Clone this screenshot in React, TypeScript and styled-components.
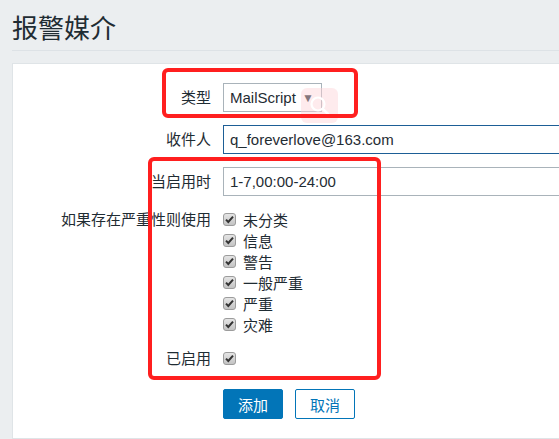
import React from 'react'
import styled, { createGlobalStyle } from 'styled-components'

const GlobalStyle = createGlobalStyle`
html, body {
  margin: 0;
  padding: 0;
  overflow: hidden;
  background: #ebeef0;
}
body {
  font-family: "Liberation Sans", Arial, "Noto Sans CJK SC", sans-serif;
  color: #1f2c33;
}
`

const severities = ['未分类', '信息', '警告', '一般严重', '严重', '灾难']

const CheckBox = () => (
  <svg width="13" height="13" viewBox="0 0 13 13">
    <defs>
      <linearGradient id="cbg" x1="0" y1="0" x2="0" y2="1">
        <stop offset="0" stopColor="#e6e6e6" />
        <stop offset="1" stopColor="#c2c2c2" />
      </linearGradient>
    </defs>
    <rect x="0.5" y="0.5" width="12" height="12" rx="2.5" fill="url(#cbg)" stroke="#9c9c9c" />
    <path d="M3 6.6 L5.3 9 L10 3.6" fill="none" stroke="#333" strokeWidth="2" />
  </svg>
)

const App = () => {
  return (
    <Page>
      <GlobalStyle />
      <Header>
        <Title>报警媒介</Title>
      </Header>
      <Card>
        <Row>
          <Label>类型</Label>
          <Select>
            <span>MailScript</span>
            <Arrow>▼</Arrow>
          </Select>
        </Row>
        <Row>
          <Label>收件人</Label>
          <Input focused>q_foreverlove@163.com</Input>
        </Row>
        <Row>
          <Label>当启用时</Label>
          <Input>1-7,00:00-24:00</Input>
        </Row>
        <Row align="start">
          <Label small>如果存在严重性则使用</Label>
          <CheckList>
            {severities.map((s) => (
              <CheckItem key={s}>
                <CheckBox />
                <span>{s}</span>
              </CheckItem>
            ))}
          </CheckList>
        </Row>
        <Row>
          <Label small>已启用</Label>
          <CheckItem>
            <CheckBox />
          </CheckItem>
        </Row>
        <Row top={20}>
          <span />
          <Buttons>
            <Button primary>添加</Button>
            <Button>取消</Button>
          </Buttons>
        </Row>
      </Card>
      <Watermark>
        <svg width="22" height="22" viewBox="0 0 22 22">
          <circle cx="9" cy="9" r="6.5" fill="none" stroke="#fff" strokeWidth="2.2" />
          <path d="M13.8 13.8 L19 19" stroke="#fff" strokeWidth="2.6" strokeLinecap="round" />
        </svg>
      </Watermark>
      <Mark style={{ left: 162, top: 68, width: 196, height: 50 }} />
      <Mark style={{ left: 148, top: 157, width: 233, height: 223 }} />
    </Page>
  )
}

export default App

const Page = styled.div`
position: relative;
width: 559px;
height: 439px;
overflow: hidden;
padding: 0 0 0 12px;
box-sizing: border-box;
`
const Header = styled.div`
height: 51px;
padding-top: 3px;
box-sizing: border-box;
display: flex;
align-items: center;
border-bottom: 1px solid #dde2e6;
margin-right: -20px;
`
const Title = styled.h1`
margin: 0;
font-size: 26px;
font-weight: normal;
color: #1f2c33;
`
const Card = styled.div`
margin-top: 12px;
margin-right: -40px;
height: 376px;
box-sizing: border-box;
background: #fff;
border: 1px solid #dfe4e7;
padding-top: 19px;
display: flex;
flex-direction: column;
gap: 13px;
`
const Row = styled.div<{ align?: string; top?: number }>`
display: grid;
grid-template-columns: 198px 1fr;
column-gap: 12px;
align-items: ${(p) => p.align || 'center'};
margin-top: ${(p) => (p.top ? p.top - 13 : 0)}px;
`
const Label = styled.div<{ small?: boolean }>`
text-align: right;
font-size: 15px;
line-height: ${(p) => (p.small ? '21px' : '29px')};
white-space: nowrap;
`
const Select = styled.div`
width: 99px;
height: 29px;
box-sizing: border-box;
border: 1px solid #a9b3ba;
display: flex;
align-items: center;
justify-content: space-between;
padding: 0 7px 0 6px;
font-size: 15px;
`
const Arrow = styled.span`
font-size: 12px;
color: #1f2c33;
`
const Input = styled.div<{ focused?: boolean }>`
width: 453px;
height: 29px;
box-sizing: border-box;
border: 1px solid ${(p) => (p.focused ? '#1d5e96' : '#a9b3ba')};
padding: 0 6px;
display: flex;
align-items: center;
font-size: 15px;
`
const CheckList = styled.div`
display: flex;
flex-direction: column;
`
const CheckItem = styled.div`
height: 21px;
display: flex;
align-items: center;
gap: 7px;
font-size: 15px;
& svg {
  flex: none;
}
`
const Buttons = styled.div`
display: flex;
gap: 12px;
`
const Button = styled.button<{ primary?: boolean }>`
width: 60px;
height: 30px;
border-radius: 2px;
font-family: "Liberation Sans", "Noto Sans CJK SC", sans-serif;
font-size: 15px;
padding: 0;
border: 1px solid #0275b8;
background: ${(p) => (p.primary ? '#0275b8' : '#fff')};
color: ${(p) => (p.primary ? '#fff' : '#0275b8')};
`
const Mark = styled.div`
position: absolute;
box-sizing: border-box;
border: 4px solid #ff1f1f;
border-radius: 6px;
`
const Watermark = styled.div`
position: absolute;
left: 301px;
top: 88px;
width: 37px;
height: 35px;
border-radius: 6px;
background: rgba(252, 210, 214, 0.45);
display: flex;
align-items: center;
justify-content: center;
`
